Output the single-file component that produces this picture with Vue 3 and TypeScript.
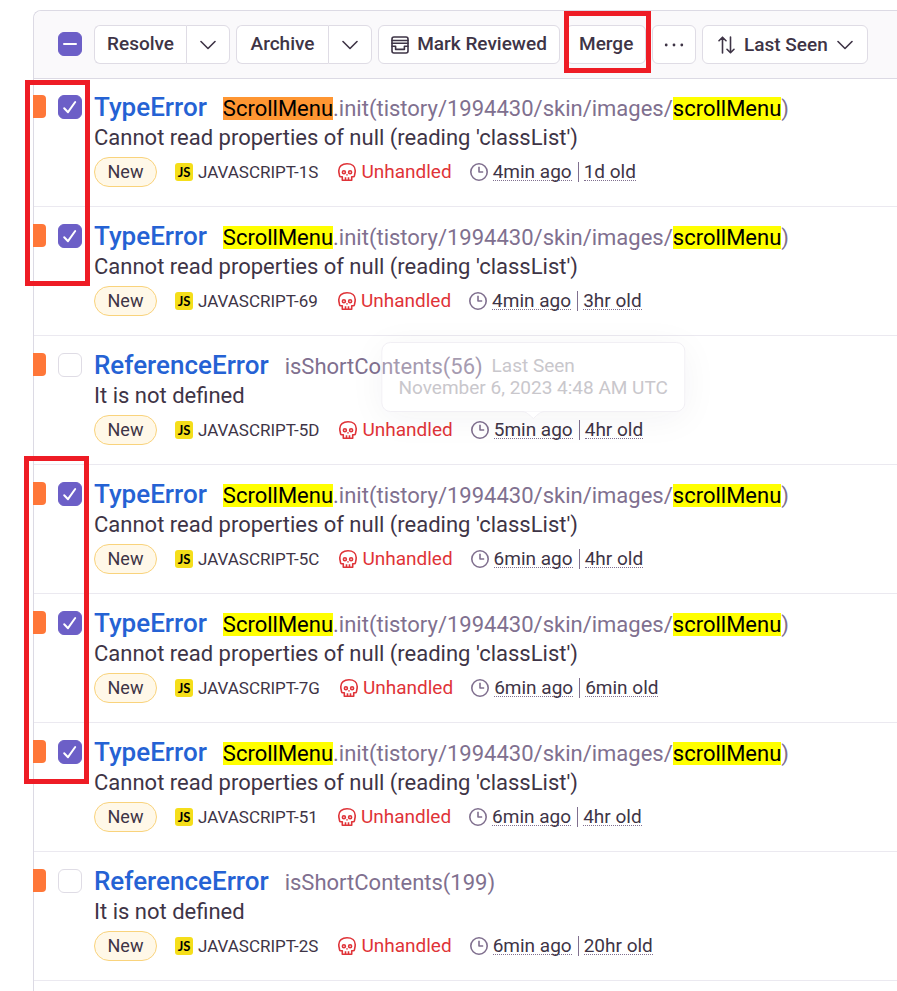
<script setup lang="ts">
import { computed, ref } from 'vue'

type Mark = 'none' | 'hit' | 'active'

interface Part {
  text: string
  mark: Mark
}

interface Issue {
  id: string
  type: string
  culprit: Part[]
  message: string
  lastSeen: string
  age: string
  checked: boolean
  tooltip?: { title: string; date: string }
}

const scrollMenu = (mark: Mark): Part[] => [
  { text: 'ScrollMenu', mark },
  { text: '.init(tistory/1994430/skin/images/', mark: 'none' },
  { text: 'scrollMenu', mark: 'hit' },
  { text: ')', mark: 'none' },
]

const typeError = (id: string, lastSeen: string, age: string, mark: Mark = 'hit'): Issue => ({
  id,
  type: 'TypeError',
  culprit: scrollMenu(mark),
  message: "Cannot read properties of null (reading 'classList')",
  lastSeen,
  age,
  checked: true,
})

const referenceError = (id: string, count: number, lastSeen: string, age: string): Issue => ({
  id,
  type: 'ReferenceError',
  culprit: [{ text: `isShortContents(${count})`, mark: 'none' }],
  message: 'It is not defined',
  lastSeen,
  age,
  checked: false,
})

const issues = ref<Issue[]>([
  typeError('JAVASCRIPT-1S', '4min ago', '1d old', 'active'),
  typeError('JAVASCRIPT-69', '4min ago', '3hr old'),
  {
    ...referenceError('JAVASCRIPT-5D', 56, '5min ago', '4hr old'),
    tooltip: { title: 'Last Seen', date: 'November 6, 2023 4:48 AM UTC' },
  },
  typeError('JAVASCRIPT-5C', '6min ago', '4hr old'),
  typeError('JAVASCRIPT-7G', '6min ago', '6min old'),
  typeError('JAVASCRIPT-51', '6min ago', '4hr old'),
  referenceError('JAVASCRIPT-2S', 199, '6min ago', '20hr old'),
])

const allChecked = computed(() => issues.value.every((issue) => issue.checked))
const someChecked = computed(() => !allChecked.value && issues.value.some((issue) => issue.checked))

function toggleAll(event: Event) {
  const on = (event.target as HTMLInputElement).checked
  issues.value.forEach((issue) => (issue.checked = on))
}
</script>

<template>
  <main class="page">
    <section class="panel">
      <header class="toolbar">
        <label class="check">
          <input
            type="checkbox"
            aria-label="Select all issues"
            :checked="allChecked"
            :indeterminate="someChecked"
            @change="toggleAll"
          />
          <svg viewBox="0 0 24 24" aria-hidden="true"><path d="M6 12h12" /></svg>
        </label>

        <div class="actions">
          <div class="split">
            <button type="button" class="btn resolve">Resolve</button>
            <button type="button" class="btn more" aria-label="Resolve options">
              <svg class="chevron" viewBox="0 0 16 10" aria-hidden="true"><path d="M1 1.5 8 8.5 15 1.5" /></svg>
            </button>
          </div>
          <div class="split">
            <button type="button" class="btn resolve">Archive</button>
            <button type="button" class="btn more" aria-label="Archive options">
              <svg class="chevron" viewBox="0 0 16 10" aria-hidden="true"><path d="M1 1.5 8 8.5 15 1.5" /></svg>
            </button>
          </div>
          <button type="button" class="btn reviewed">
            <svg class="tray" viewBox="0 0 18 18" aria-hidden="true">
              <rect x="1" y="1" width="16" height="16" rx="2" />
              <path d="M1 4.5h16M1 7.3h16M1 10.2h3.6v3.2h8.8v-3.2H17" />
            </svg>
            <span>Mark Reviewed</span>
          </button>
          <div class="merge-wrap">
            <button type="button" class="btn merge">Merge</button>
          </div>
          <button type="button" class="btn dots" aria-label="More actions">
            <svg viewBox="0 0 20 4" aria-hidden="true">
              <circle cx="2.2" cy="2" r="1.4" /><circle cx="10" cy="2" r="1.4" /><circle cx="17.8" cy="2" r="1.4" />
            </svg>
          </button>
          <button type="button" class="btn sort">
            <svg class="arrows" viewBox="0 0 17 18" aria-hidden="true">
              <path d="M4.5 17V1.2M1 4.7l3.5-3.5L8 4.7M12.5 1v15.8M9 13.3l3.5 3.5 3.5-3.5" />
            </svg>
            <span>Last Seen</span>
            <svg class="chevron" viewBox="0 0 16 10" aria-hidden="true"><path d="M1 1.5 8 8.5 15 1.5" /></svg>
          </button>
        </div>
      </header>

      <ul class="issues">
        <li v-for="issue in issues" :key="issue.id" class="issue">
          <span class="level"></span>
          <label class="check">
            <input v-model="issue.checked" type="checkbox" :aria-label="`Select ${issue.id}`" />
            <svg viewBox="0 0 24 24" aria-hidden="true"><path d="M6.2 13.2 10 17.2 17.2 7" /></svg>
          </label>
          <div class="body">
            <div class="title">
              <a href="#" class="type">{{ issue.type }}</a>
              <span class="culprit"><template v-for="(part, i) in issue.culprit" :key="i"><mark v-if="part.mark !== 'none'" :class="part.mark">{{ part.text }}</mark><template v-else>{{ part.text }}</template></template></span>
            </div>
            <div class="message">{{ issue.message }}</div>
            <div class="meta">
              <span class="badge">New</span>
              <span class="project">
                <span class="js">JS</span>
                <span class="short-id">{{ issue.id }}</span>
              </span>
              <span class="unhandled">
                <svg viewBox="0 0 18 18" aria-hidden="true">
                  <path d="M4.3 17.2v-3.5H2.7c-.6 0-1-.4-1.1-.9l-.4-2C.9 9.8.8 8.7.8 7.5.8 3.6 4 .8 9 .8s8.2 2.8 8.2 6.7c0 1.2-.1 2.300-.4 3.300l-.4 2c-.1.5-.5.9-1.100.9h-1.600v3.500z" />
                  <path d="M7.5 14.3V17M10.500 14.300V17" />
                  <circle cx="5.9" cy="9.300" r="1.500" />
                  <circle cx="12.100" cy="9.300" r="1.500" />
                  <path d="M9 11.200v1.300" />
                </svg>
                <span>Unhandled</span>
              </span>
              <span class="times">
                <svg viewBox="0 0 18 18" aria-hidden="true">
                  <circle cx="9" cy="9" r="8.2" />
                  <path d="M9 3.8V9h4.2" />
                </svg>
                <span class="seen">
                  <time>{{ issue.lastSeen }}</time>
                  <span v-if="issue.tooltip" class="tooltip" role="tooltip">
                    <span>{{ issue.tooltip.title }}</span>
                    <span>{{ issue.tooltip.date }}</span>
                    <svg viewBox="0 0 24 8" aria-hidden="true"><path d="M0 .5C5 .5 7 3 12 7.5 17 3 19 .5 24 .5" /></svg>
                  </span>
                </span>
                <span class="bar"></span>
                <time>{{ issue.age }}</time>
              </span>
            </div>
          </div>
        </li>
      </ul>
    </section>

    <div class="callout first-group"></div>
    <div class="callout second-group"></div>
  </main>
</template>

<style>
body {
  margin: 0;
  background: #fff;
}
</style>

<style scoped>
.page {
  position: relative;
  display: flex;
  flex-direction: column;
  box-sizing: border-box;
  min-height: 100vh;
  padding: 10px 0 0 33px;
  overflow: hidden;
  color: #3e3446;
  font-family: Roboto, 'Liberation Sans', sans-serif;
  font-size: 19px;
  line-height: 22px;
}

.panel {
  flex: 1;
  border: solid #dcdae4;
  border-width: 1px 0 0 1px;
  border-top-left-radius: 8px;
}

.toolbar {
  display: flex;
  align-items: flex-start;
  gap: 12px;
  padding: 14px 0 14px 24px;
  border-bottom: 1px solid #dcdae4;
  border-top-left-radius: 8px;
  background: #faf9fb;
}

.toolbar .check {
  margin-top: 7px;
}

.actions {
  display: flex;
  gap: 6px;
}

.split {
  display: flex;
}

.btn {
  display: flex;
  align-items: center;
  justify-content: center;
  box-sizing: border-box;
  height: 39px;
  padding: 0 12px;
  border: 1px solid #dfdce5;
  border-radius: 6px;
  background: #fff;
  color: #3e3446;
  font: 500 19px/22px Roboto, 'Liberation Sans', sans-serif;
  white-space: nowrap;
  cursor: pointer;
}

.btn svg {
  flex: none;
  fill: none;
  stroke: currentColor;
  stroke-width: 1.6;
  stroke-linecap: round;
  stroke-linejoin: round;
}

.resolve,
.merge,
.reviewed span {
  padding-bottom: 2px;
}

.resolve {
  min-width: 92px;
  border-right: 0;
  border-radius: 6px 0 0 6px;
}

.more {
  width: 44px;
  border-radius: 0 6px 6px 0;
}

.chevron {
  width: 16px;
  height: 10px;
}

.reviewed {
  gap: 8px;
  min-width: 182px;
}

.tray {
  width: 18px;
  height: 18px;
}

.merge-wrap {
  position: relative;
}

.merge {
  min-width: 80px;
}

.merge-wrap::after {
  position: absolute;
  inset: -14px -5px -9px -2px;
  border: 5px solid #ee1c25;
  content: '';
  pointer-events: none;
}

.dots {
  width: 44px;
}

.dots svg {
  width: 20px;
  height: 4px;
  fill: currentColor;
  stroke: none;
}

.sort {
  gap: 9px;
  min-width: 166px;
}

.arrows {
  width: 17px;
  height: 18px;
}

.check {
  display: grid;
  flex: none;
  width: 24px;
  height: 24px;
}

.check input {
  grid-area: 1 / 1;
  box-sizing: border-box;
  width: 24px;
  height: 24px;
  margin: 0;
  border: 1px solid #dfdce5;
  border-radius: 6px;
  background: #fff;
  appearance: none;
}

.check input:checked,
.check input:indeterminate {
  border-color: #6c5fc7;
  background: #6c5fc7;
}

.check svg {
  grid-area: 1 / 1;
  z-index: 1;
  visibility: hidden;
  fill: none;
  stroke: #fff;
  stroke-width: 2;
  stroke-linecap: round;
  stroke-linejoin: round;
  pointer-events: none;
}

.check input:checked + svg,
.check input:indeterminate + svg {
  visibility: visible;
}

.issues {
  margin: -1px 0 0;
  padding: 0;
  list-style: none;
}

.issue {
  display: flex;
  align-items: flex-start;
  box-sizing: border-box;
  min-height: 129px;
  padding: 14px 0 12px;
  border-bottom: 1px solid #ebe9f0;
}

.level {
  flex: none;
  width: 13px;
  height: 23px;
  margin: 3px 12px 0 -1px;
  border-radius: 0 4px 4px 0;
  background: #ff7738;
}

.issue .check {
  margin: 3px 12px 0 0;
}

.body {
  min-width: 0;
}

.title,
.message {
  font-size: 22px;
  line-height: 29px;
  white-space: nowrap;
}

.title {
  display: flex;
  align-items: baseline;
  gap: 16px;
  padding-top: 1px;
}

.type {
  color: #2562d4;
  font-size: 26px;
  font-weight: 500;
  text-decoration: none;
}

.culprit {
  color: #80708f;
}

mark {
  display: inline-block;
  background: #ff0;
  color: #000;
  line-height: 23px;
}

mark.active {
  background: #ff9632;
}

.meta {
  display: flex;
  align-items: center;
  margin-top: 5px;
  white-space: nowrap;
}

.badge {
  box-sizing: border-box;
  width: 63px;
  height: 30px;
  margin-right: 18px;
  border: 1px solid #f9d37c;
  border-radius: 15px;
  background: #fff8e8;
  font-size: 18px;
  line-height: 27px;
  text-align: center;
}

.project,
.unhandled,
.times {
  display: flex;
  align-items: center;
  gap: 5px;
}

.project {
  margin-right: 20px;
}

.unhandled {
  margin-right: 18px;
}

.js {
  width: 18px;
  height: 18px;
  border-radius: 3px;
  background: #f5de1a;
  color: #000;
  font: 700 13px/19px Lato, sans-serif;
  text-align: center;
}

.short-id {
  font-size: 17px;
}

.unhandled {
  color: #df3338;
}

.unhandled span {
  padding-bottom: 1px;
}

.unhandled svg,
.times > svg {
  width: 18px;
  height: 18px;
  fill: none;
  stroke: currentColor;
  stroke-width: 1.6;
  stroke-linejoin: round;
}

.times > svg {
  color: #80708f;
}

time {
  display: block;
  margin-bottom: 1px;
  border-bottom: 1px dotted #80708f;
  line-height: 17px;
}

.seen {
  position: relative;
}

.bar {
  width: 1px;
  height: 20px;
  margin-left: 1px;
  background: #80708f;
}

.tooltip {
  position: absolute;
  bottom: 28px;
  left: 50%;
  display: flex;
  flex-direction: column;
  align-items: center;
  padding: 12px 16px;
  border: 1px solid #f1eff4;
  border-radius: 9px;
  background: rgb(255 255 255 / 30%);
  box-shadow: 0 6px 36px rgb(43 34 51 / 5%);
  color: #c9c7cc;
  transform: translateX(-50%);
}

.tooltip svg {
  position: absolute;
  top: 100%;
  left: 50%;
  width: 24px;
  height: 8px;
  fill: #fff;
  stroke: #f1eff4;
  transform: translateX(-50%);
}

.callout {
  position: absolute;
  box-sizing: border-box;
  width: 65px;
  border: 5px solid #ee1c25;
  pointer-events: none;
}

.first-group {
  top: 80px;
  left: 25px;
  height: 206px;
}

.second-group {
  top: 456px;
  left: 24px;
  height: 328px;
}
</style>
